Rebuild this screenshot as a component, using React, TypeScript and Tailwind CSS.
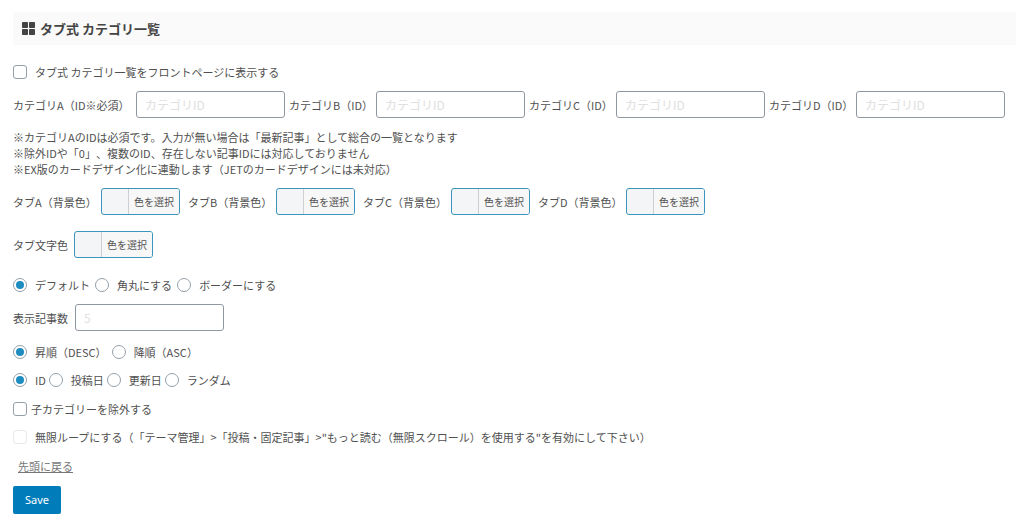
import type { ReactNode } from 'react';

const categories = [
  { id: 'cat-a', label: 'カテゴリA（ID※必須）', width: 'w-[119px]' },
  { id: 'cat-b', label: 'カテゴリB（ID）', width: 'w-[83px]' },
  { id: 'cat-c', label: 'カテゴリC（ID）', width: 'w-[83px]' },
  { id: 'cat-d', label: 'カテゴリD（ID）', width: 'w-[83px]' },
];

const tabColors = [
  { id: 'tab-a', label: 'タブA（背景色）' },
  { id: 'tab-b', label: 'タブB（背景色）' },
  { id: 'tab-c', label: 'タブC（背景色）' },
  { id: 'tab-d', label: 'タブD（背景色）' },
];

function TextField({ id, placeholder }: { id: string; placeholder: string }) {
  return (
    <input
      id={id}
      type="text"
      placeholder={placeholder}
      className="h-[27px] w-[149px] rounded-[3px] border border-[#8f98a1] bg-white px-2 text-xs text-[#32373c] placeholder:text-[#e0e0e0]"
    />
  );
}

function ColorButton({ id }: { id: string }) {
  return (
    <button
      id={id}
      type="button"
      className="flex h-[27px] w-[79px] shrink-0 overflow-hidden rounded-[3px] border border-[#3a94bb] bg-[#f3f5f6]"
    >
      <span className="h-full w-[27px] shrink-0 border-r border-[#ccd0d4]" />
      <span className="flex h-full flex-1 items-center justify-center bg-[#f7f7f7] text-[10px] text-[#555]">
        色を選択
      </span>
    </button>
  );
}

interface CheckProps {
  children: ReactNode;
  disabled?: boolean;
  tight?: boolean;
}

function Check({ children, disabled = false, tight = false }: CheckProps) {
  return (
    <label className={`flex h-5 items-center ${tight ? 'gap-1' : 'gap-2'}`}>
      <input
        type="checkbox"
        disabled={disabled}
        className="size-[14px] shrink-0 appearance-none rounded-[3px] border border-[#969fa8] bg-white checked:bg-[#1e8cbe] disabled:border-[#e6e8ea]"
      />
      <span>{children}</span>
    </label>
  );
}

function RadioGroup({ name, options, className }: { name: string; options: string[]; className: string }) {
  return (
    <div role="radiogroup" className={`flex h-5 flex-wrap items-center ${className}`}>
      {options.map((option, i) => (
        <label key={option} className="flex items-center gap-2">
          <input
            type="radio"
            name={name}
            defaultChecked={i === 0}
            className="size-[14px] shrink-0 appearance-none rounded-full border border-[#969fa8] bg-white checked:bg-[#1e8cbe] bg-clip-content p-[2px]"
          />
          <span className="whitespace-nowrap">{option}</span>
        </label>
      ))}
    </div>
  );
}

export default function App() {
  return (
    <form
      className="bg-white pt-3 pr-2 pb-[7px] pl-[13px] font-['Noto_Sans_CJK_JP',sans-serif] text-[11px] leading-4 text-[#505050] [text-spacing-trim:space-all]"
      onSubmit={(e) => e.preventDefault()}
    >
      <h2 className="flex h-[33px] items-center gap-[5px] bg-[#fafafa] px-[9px] text-[13px] font-semibold text-[#444]">
        <svg className="size-[13px]" viewBox="0 0 13 13" fill="currentColor" aria-hidden="true">
          <rect x="0" y="0" width="6" height="6" rx="0.7" />
          <rect x="7" y="0" width="6" height="6" rx="0.7" />
          <rect x="0" y="7" width="6" height="6" rx="0.7" />
          <rect x="7" y="7" width="6" height="6" rx="0.7" />
        </svg>
        タブ式 カテゴリ一覧
      </h2>

      <div className="mt-[17px]">
        <Check>タブ式 カテゴリ一覧をフロントページに表示する</Check>
      </div>

      <div className="mt-[9px] flex flex-wrap items-center gap-1">
        {categories.map((c) => (
          <div key={c.id} className="flex items-center gap-1">
            <label htmlFor={c.id} className={`shrink-0 whitespace-nowrap ${c.width}`}>
              {c.label}
            </label>
            <TextField id={c.id} placeholder="カテゴリID" />
          </div>
        ))}
      </div>

      <p className="mt-[11px]">
        ※カテゴリAのIDは必須です。入力が無い場合は「最新記事」として総合の一覧となります
        <br />
        ※除外IDや「0」、複数のID、存在しない記事IDには対応しておりません
        <br />
        ※EX版のカードデザイン化に連動します（JETのカードデザインには未対応）
      </p>

      <div className="mt-[11px] flex flex-wrap items-center gap-2">
        {tabColors.map((t) => (
          <div key={t.id} className="flex items-center">
            <label htmlFor={t.id} className="w-[88px] whitespace-nowrap">
              {t.label}
            </label>
            <ColorButton id={t.id} />
          </div>
        ))}
      </div>

      <div className="mt-4 flex items-center gap-1">
        <label htmlFor="tab-text" className="w-[57px]">タブ文字色</label>
        <ColorButton id="tab-text" />
      </div>

      <div className="mt-[17px]">
        <RadioGroup name="shape" options={['デフォルト', '角丸にする', 'ボーダーにする']} className="gap-[5px]" />
      </div>

      <div className="mt-[9px] flex items-center gap-1">
        <label htmlFor="count" className="w-[58px]">表示記事数</label>
        <TextField id="count" placeholder="5" />
      </div>

      <div className="mt-[11px]">
        <RadioGroup name="order" options={['昇順（DESC）', '降順（ASC）']} className="gap-[5px]" />
      </div>
      <div className="mt-2">
        <RadioGroup name="orderby" options={['ID', '投稿日', '更新日', 'ランダム']} className="gap-[3px]" />
      </div>

      <div className="mt-[9px]">
        <Check tight>子カテゴリーを除外する</Check>
      </div>
      <div className="mt-2">
        <Check disabled>
          無限ループにする（「テーマ管理」&gt;「投稿・固定記事」&gt;&quot;もっと読む（無限スクロール）を使用する&quot;を有効にして下さい）
        </Check>
      </div>

      <div className="mt-[9px] flex h-5 items-center pl-[5px]">
        <a href="#top" className="text-[#777] underline">先頭に戻る</a>
      </div>

      <button
        type="submit"
        className="mt-[10px] h-7 rounded-[2px] bg-[#007cba] px-3 font-['Noto_Sans',sans-serif] text-white"
      >
        Save
      </button>
    </form>
  );
}
